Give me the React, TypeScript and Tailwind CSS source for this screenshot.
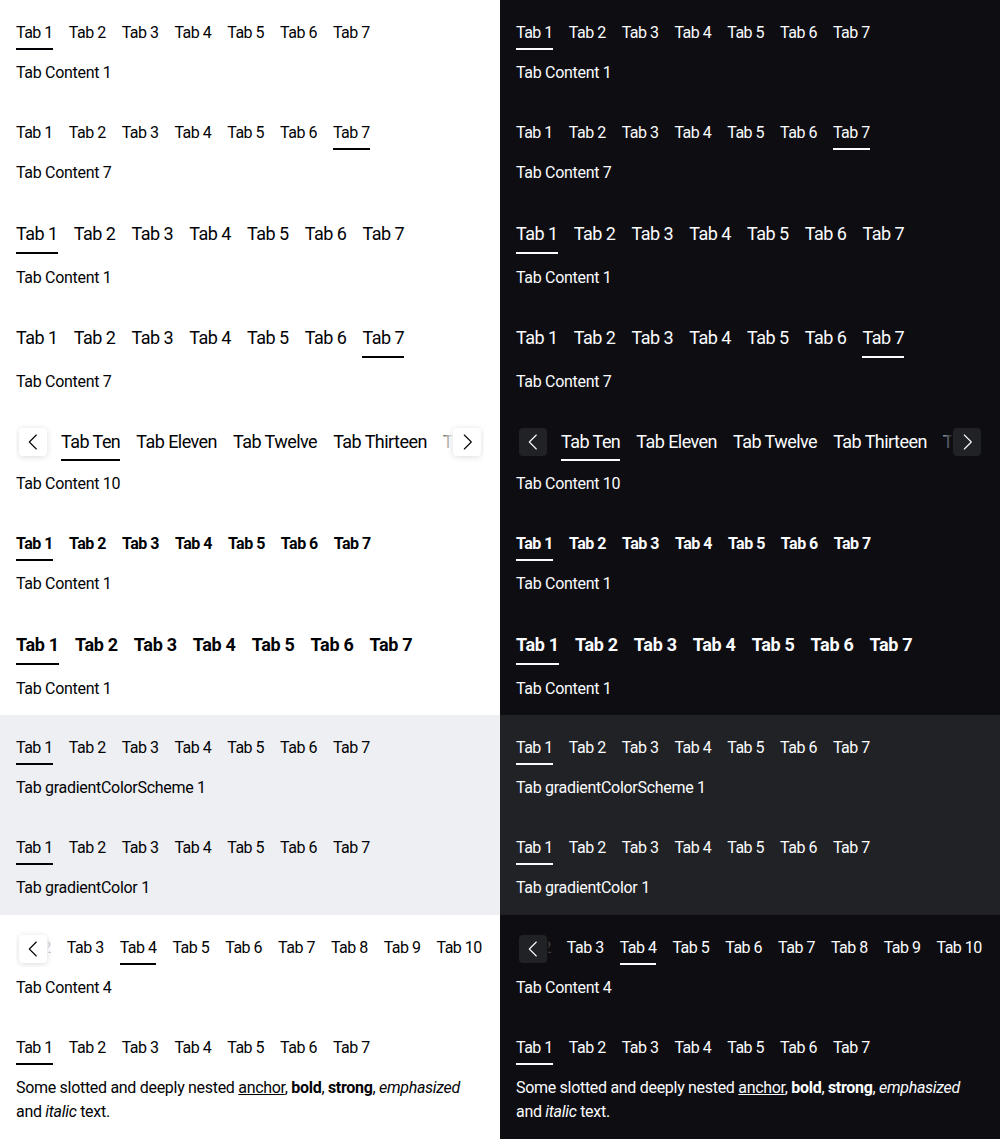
import React from 'react';

type Theme = 'light' | 'dark';

const T = {
  light: {
    text: 'text-[#010205]',
    line: 'bg-[#010205]',
    bg: 'bg-white',
    surface: 'bg-[#eeeff2]',
    btn: 'bg-white shadow-[0_1px_6px_rgba(0,0,0,0.14)]',
    fadeL: 'bg-linear-to-r from-white to-transparent',
    fadeR: 'bg-linear-to-l from-white to-transparent',
    stroke: '#010205',
  },
  dark: {
    text: 'text-[#fbfcff]',
    line: 'bg-[#fbfcff]',
    bg: 'bg-[#0e0e12]',
    surface: 'bg-[#212225]',
    btn: 'bg-[#212225]',
    fadeL: 'bg-linear-to-r from-[#0e0e12] to-transparent',
    fadeR: 'bg-linear-to-l from-[#0e0e12] to-transparent',
    stroke: '#fbfcff',
  },
};

const FONT = "font-['Roboto','Liberation_Sans',sans-serif]";

type TabProps = {
  labels: string[];
  active: number;
  size: 'small' | 'medium';
  bold?: boolean;
  theme: Theme;
  underlineGap?: string;
  tracking?: string;
};

function Tabs({ labels, active, size, bold, theme, underlineGap, tracking }: TabProps) {
  const t = T[theme];
  const small = size === 'small';
  const track =
    tracking ?? (small ? 'tracking-[-0.5px]' : bold ? 'tracking-[-0.3px]' : 'tracking-[-0.5px]');
  return (
    <div className="flex gap-4">
      {labels.map((l, i) => (
        <div key={l} className={`flex shrink-0 flex-col ${small ? 'pt-[5px] pb-[2px]' : 'pt-1 pb-[2px]'}`}>
          <span
            className={`whitespace-nowrap ${small ? 'text-[16px] leading-6' : 'text-[18px] leading-7'} ${track} ${
              bold ? 'font-bold' : 'font-normal'
            } ${t.text}`}
          >
            {l}
          </span>
          <div
            className={`h-[2px] ${underlineGap ?? (small ? 'mt-[3px]' : 'mt-1')} ${
              i === active ? t.line : 'bg-transparent'
            }`}
          />
        </div>
      ))}
    </div>
  );
}

function Chevron({ dir, color }: { dir: 'left' | 'right'; color: string }) {
  return (
    <svg width="28" height="28" viewBox="0 0 28 28" fill="none">
      <path
        d={dir === 'left' ? 'M17.3 7 L10.3 14 L17.3 21' : 'M11.3 7 L18.3 14 L11.3 21'}
        stroke={color}
        strokeWidth="1.1"
        strokeLinecap="round"
        strokeLinejoin="round"
      />
    </svg>
  );
}

function ScrollTabs({
  labels,
  active,
  size,
  theme,
  offset,
  showRight,
  underlineGap,
  tracking,
  solidBg,
}: {
  labels: string[];
  active: number;
  size: 'small' | 'medium';
  theme: Theme;
  offset: string;
  showRight: boolean;
  underlineGap?: string;
  tracking?: string;
  solidBg: string;
}) {
  const t = T[theme];
  return (
    <div className="relative overflow-hidden">
      <div className={offset}>
        <Tabs
          labels={labels}
          active={active}
          size={size}
          theme={theme}
          underlineGap={underlineGap}
          tracking={tracking}
        />
      </div>
      <div className="absolute left-0 top-0 bottom-0 flex">
        <div className={`w-[31px] h-full ${solidBg} relative`}>
          <div className={`absolute left-[3px] top-1 w-7 h-7 rounded ${t.btn}`}>
            <Chevron dir="left" color={t.stroke} />
          </div>
        </div>
        <div className={`w-3 h-full ${t.fadeL}`} />
      </div>
      {showRight && (
        <div className="absolute right-0 top-0 bottom-0 flex">
          <div className={`w-4 h-full ${t.fadeR}`} />
          <div className={`w-[31px] h-full ${solidBg} relative`}>
            <div className={`absolute right-[3px] top-1 w-7 h-7 rounded ${t.btn}`}>
              <Chevron dir="right" color={t.stroke} />
            </div>
          </div>
        </div>
      )}
    </div>
  );
}

const seven = ['Tab 1', 'Tab 2', 'Tab 3', 'Tab 4', 'Tab 5', 'Tab 6', 'Tab 7'];

function Content({ theme, children, cls }: { theme: Theme; children: React.ReactNode; cls: string }) {
  return <div className={`text-[16px] leading-6 tracking-[-0.3px] ${T[theme].text} ${cls}`}>{children}</div>;
}

function Column({ theme }: { theme: Theme }) {
  const t = T[theme];
  return (
    <div className={`${t.bg} ${FONT}`}>
      <section className="px-4 pt-4 pb-[15px]">
        <Tabs labels={seven} active={0} size="small" theme={theme} />
        <Content theme={theme} cls="mt-[9px]">Tab Content 1</Content>
      </section>
      <section className="px-4 pt-4 pb-[15px]">
        <Tabs labels={seven} active={6} size="small" theme={theme} />
        <Content theme={theme} cls="mt-[9px]">Tab Content 7</Content>
      </section>
      <section className="px-4 pt-4 pb-[14px]">
        <Tabs labels={seven} active={0} size="medium" theme={theme} />
        <Content theme={theme} cls="mt-[10px]">Tab Content 1</Content>
      </section>
      <section className="px-4 pt-4 pb-[14px]">
        <Tabs labels={seven} active={6} size="medium" theme={theme} />
        <Content theme={theme} cls="mt-[10px]">Tab Content 7</Content>
      </section>
      <section className="px-4 pt-4 pb-[16px]">
        <ScrollTabs
          labels={['Tab Ten', 'Tab Eleven', 'Tab Twelve', 'Tab Thirteen', 'Tab Fourteen']}
          active={0}
          size="medium"
          theme={theme}
          offset="ml-[45px]"
          showRight
          underlineGap="mt-[3px]"
          tracking="tracking-[-0.55px]"
          solidBg={t.bg}
        />
        <Content theme={theme} cls="mt-[9px]">Tab Content 10</Content>
      </section>
      <section className="px-4 pt-[15px] pb-4">
        <Tabs labels={seven} active={0} size="small" bold theme={theme} />
        <Content theme={theme} cls="mt-[9px]">Tab Content 1</Content>
      </section>
      <section className="px-4 pt-[15px] pb-[14px]">
        <Tabs labels={seven} active={0} size="medium" bold theme={theme} />
        <Content theme={theme} cls="mt-[10px]">Tab Content 1</Content>
      </section>
      <div className={t.surface}>
        <section className="px-4 pt-4 pb-[15px]">
          <Tabs labels={seven} active={0} size="small" theme={theme} />
          <Content theme={theme} cls="mt-[9px]">Tab gradientColorScheme 1</Content>
        </section>
        <section className="px-4 pt-4 pb-[15px]">
          <Tabs labels={seven} active={0} size="small" theme={theme} />
          <Content theme={theme} cls="mt-[9px]">Tab gradientColor 1</Content>
        </section>
      </div>
      <section className="px-4 pt-4 pb-[15px]">
        <ScrollTabs
          labels={['Tab 2', 'Tab 3', 'Tab 4', 'Tab 5', 'Tab 6', 'Tab 7', 'Tab 8', 'Tab 9', 'Tab 10']}
          active={2}
          size="small"
          theme={theme}
          offset="-ml-[2px]"
          showRight={false}
          solidBg={t.bg}
        />
        <Content theme={theme} cls="mt-[9px]">Tab Content 4</Content>
      </section>
      <section className="px-4 pt-4 pb-[15px]">
        <Tabs labels={seven} active={0} size="small" theme={theme} />
        <Content theme={theme} cls="mt-[9px]">
          Some slotted and deeply nested <a className="underline">anchor</a>, <b className="font-bold">bold</b>,{' '}
          <strong className="font-bold">strong</strong>, <em className="italic">emphasized</em>
          <br />
          and <i className="italic">italic</i> text.
        </Content>
      </section>
    </div>
  );
}

export default function App() {
  return (
    <div className="grid grid-cols-2 w-[1000px] min-h-[1139px]">
      <Column theme="light" />
      <Column theme="dark" />
    </div>
  );
}
